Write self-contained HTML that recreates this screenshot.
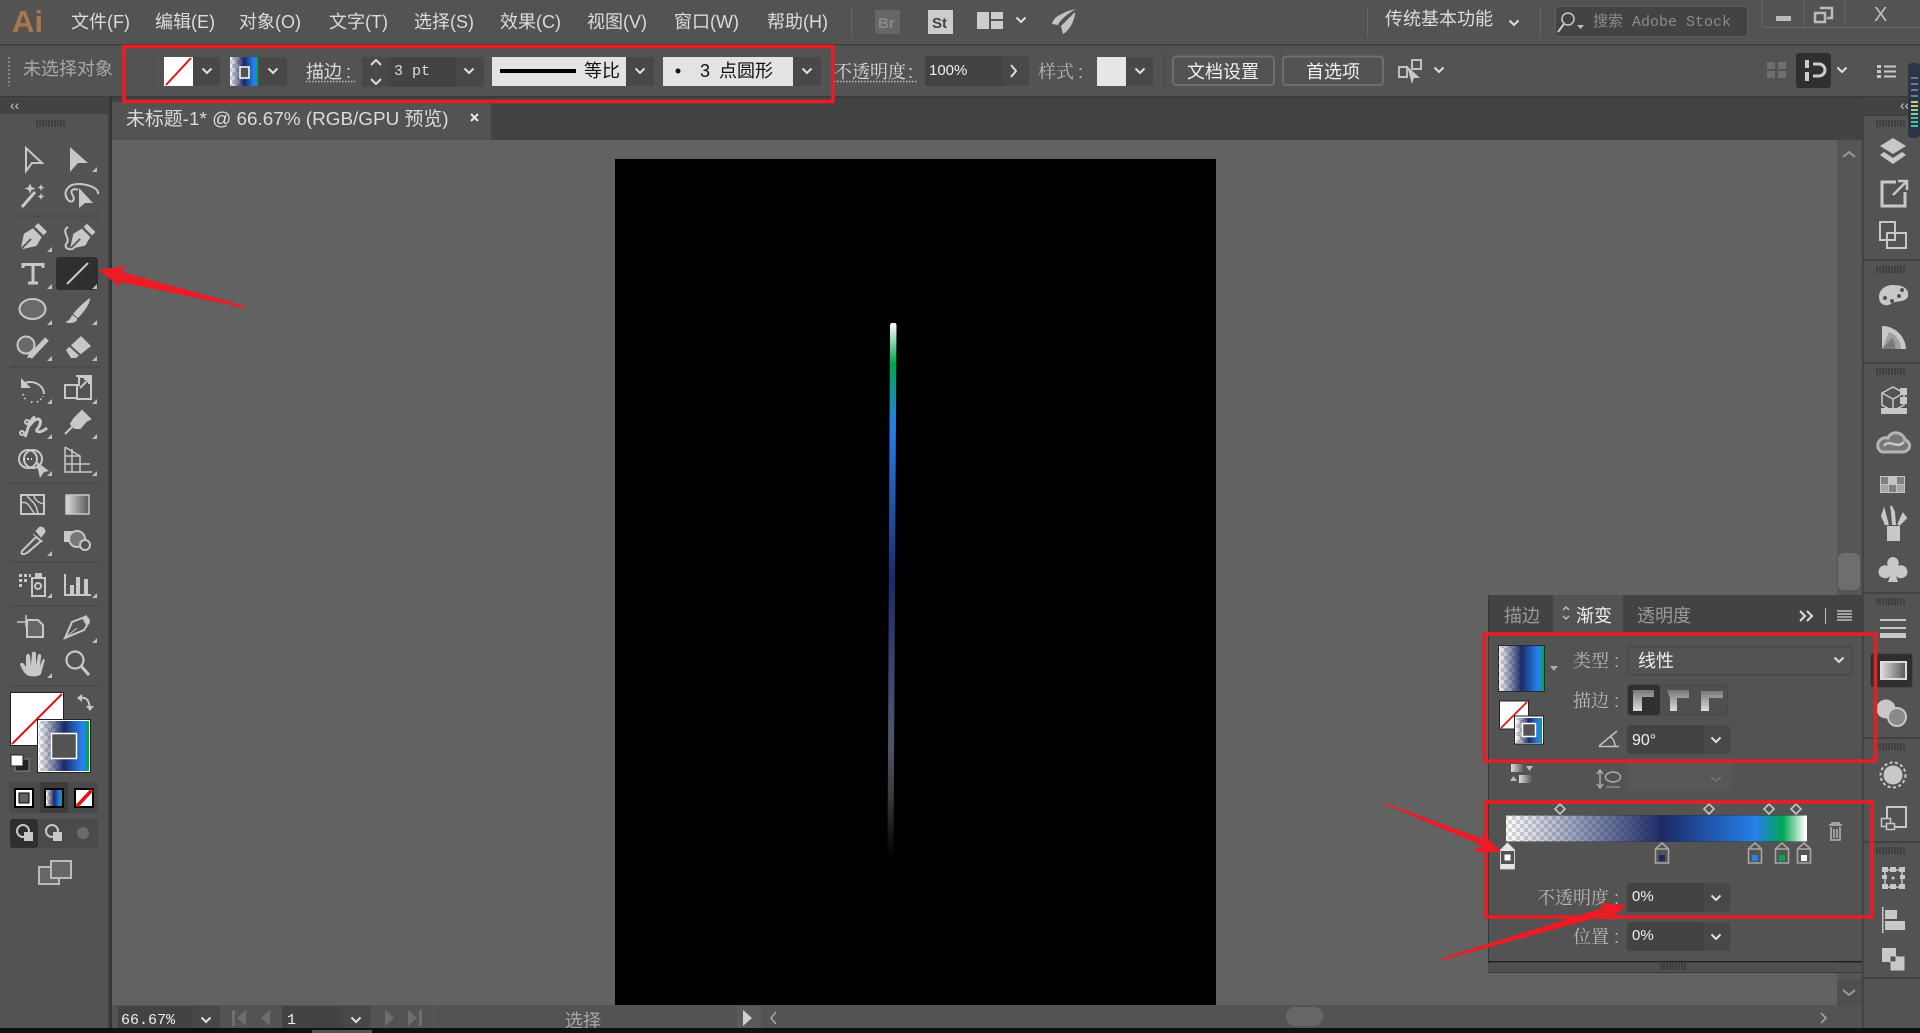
<!DOCTYPE html>
<html lang="zh"><head><meta charset="utf-8"><title>Illustrator</title>
<style>
html,body{margin:0;padding:0;width:1920px;height:1033px;overflow:hidden;background:#535353}
svg{display:block}
text{font-family:"Liberation Sans","Noto Sans CJK SC",sans-serif;font-size:18px;fill:#ccc}
.m{fill:#dcdcdc}.d{fill:#a8a8a8}.w{fill:#f0f0f0}.k{fill:#111}
.s{font-family:"Liberation Sans","Noto Serif CJK SC",serif;fill:#b8b8b8}
.o{font-family:"Liberation Mono","Noto Sans CJK SC",monospace;font-size:15px}
.i{fill:none;stroke:#c8c8c8;stroke-width:2}
.f{fill:#c8c8c8}
.r{fill:none;stroke:#ed1c24;stroke-width:3.5}
.h{fill:none;stroke:#c0c0c0;stroke-width:2}
</style></head><body>
<svg width="1920" height="1033" viewBox="0 0 1920 1033" xmlns="http://www.w3.org/2000/svg">
<defs>
<linearGradient id="g"><stop offset="0" stop-color="#1b2a66" stop-opacity="0"/><stop offset=".52" stop-color="#1b2a66"/><stop offset=".83" stop-color="#2680eb"/><stop offset=".92" stop-color="#00a651"/><stop offset=".995" stop-color="#fff"/></linearGradient>
<linearGradient id="g3"><stop offset="0" stop-color="#1b2a66" stop-opacity="0"/><stop offset=".5" stop-color="#1b2a66"/><stop offset=".85" stop-color="#2680eb"/><stop offset=".93" stop-color="#2680eb"/><stop offset=".95" stop-color="#00a651"/></linearGradient>
<linearGradient id="gy"><stop offset="0" stop-color="#ddd"/><stop offset="1" stop-color="#555"/></linearGradient>
<linearGradient id="gv" x1="0" y1="0" x2="0" y2="1"><stop offset="0" stop-color="#777"/><stop offset="1" stop-color="#ddd"/></linearGradient>
<linearGradient id="ln" gradientUnits="userSpaceOnUse" x1="0" y1="323" x2="0" y2="858"><stop offset="0" stop-color="#fff"/><stop offset=".075" stop-color="#00a651"/><stop offset=".19" stop-color="#2680eb"/><stop offset=".48" stop-color="#1b2a66"/><stop offset=".647" stop-color="#3a4570"/><stop offset=".786" stop-color="#50566a"/><stop offset=".89" stop-color="#383838"/><stop offset="1" stop-color="#000"/></linearGradient>
<pattern id="ck" width="8" height="8" patternUnits="userSpaceOnUse"><rect width="8" height="8" fill="#fff"/><rect width="4" height="4" fill="#d8d8d8"/><rect x="4" y="4" width="4" height="4" fill="#d8d8d8"/></pattern>
<path id="c" d="M-4.5,-2.5 L0,2 L4.5,-2.5" fill="none" stroke="#e0e0e0" stroke-width="2"/>
<path id="t" d="M0,0 H-5 L0,-5Z" fill="#c0c0c0"/>
<path id="gr" d="M0,0v7M3,0v7M6,0v7M9,0v7M12,0v7M15,0v7M18,0v7M21,0v7M24,0v7M27,0v7" stroke="#2c2c2c" stroke-width="1" fill="none"/>
<path id="dm" d="M0,-5 L5,0 L0,5 L-5,0Z" fill="#535353" stroke="#c4c4c4" stroke-width="1.6"/>
<path id="st" d="M-6.5,10 V-4 L0,-10 L6.5,-4 V10Z M-6.5,-4 H6.5" fill="#535353" stroke="#a8a8a8" stroke-width="1.6"/>
</defs>

<rect width="1920" height="1033" fill="#535353"/>
<!-- tab strip + canvas -->
<rect x="108" y="97" width="1812" height="43" fill="#434343"/>
<rect x="112" y="140" width="1750" height="865" fill="#626262"/>
<rect x="615" y="159" width="601" height="846" fill="#000"/>
<polygon points="890,325 891,323 895.500,323 896.500,325 893.500,858 887.500,858" fill="url(#ln)"/>

<!-- menu bar -->
<rect width="1920" height="45" fill="#535353"/>
<rect y="44" width="1920" height="1.500" fill="#3c3c3c"/>
<text x="12" y="32" style="font-size:31px;font-weight:700;fill:#a8774e">Ai</text>
<text class="m" x="71" y="28">文件(F)</text><text class="m" x="155" y="28">编辑(E)</text><text class="m" x="239" y="28">对象(O)</text><text class="m" x="329" y="28">文字(T)</text><text class="m" x="414" y="28">选择(S)</text><text class="m" x="500" y="28">效果(C)</text><text class="m" x="587" y="28">视图(V)</text><text class="m" x="674" y="28">窗口(W)</text><text class="m" x="767" y="28">帮助(H)</text>
<rect x="851" y="8" width="1" height="29" fill="#666"/>
<rect x="875" y="10" width="25" height="24" fill="#666"/><text x="878" y="28" style="font-size:15px;font-weight:700;fill:#8a8a8a">Br</text>
<rect x="928" y="10" width="25" height="24" fill="#ccc"/><text x="932" y="28" style="font-size:15px;font-weight:700;fill:#444">St</text>
<path d="M977,12h12v17h-12zM991,12h12v7h-12zM991,21h12v8h-12z" fill="#ccc"/><use href="#c" x="1021" y="20"/>
<path d="M1076,9 C1072,11 1061,18 1058,25 L1052,24 C1053,20 1056,16 1062,14 C1066,11 1072,10 1076,9Z M1075,12 C1075,20 1070,30 1063,34 L1061,26 C1065,22 1071,16 1075,12Z" fill="#c4c4c4"/>
<rect x="1367" y="8" width="1" height="29" fill="#666"/>
<text class="m" x="1385" y="25">传统基本功能</text><use href="#c" x="1514" y="23"/>
<rect x="1540" y="8" width="1" height="29" fill="#666"/>
<rect x="1555.500" y="6.500" width="192" height="30" rx="3" fill="#434343" stroke="#5e5e5e"/>
<circle cx="1568" cy="19" r="6" class="i" style="stroke-width:1.500"/><path d="M1564,24 L1558,32" class="i"/><path d="M1577,25h7l-3.500,4z" fill="#bbb"/>
<text class="o" x="1593" y="26" style="fill:#8c8c8c">搜索 Adobe Stock</text>
<path d="M1762,0 V27.500 H1920 M1804,0 V27 M1845,0 V27" fill="none" stroke="#666"/>
<rect x="1776" y="16" width="15" height="5" fill="#bbb"/>
<path d="M1820,8h12v10h-5M1815,13h10v9h-10z" fill="none" stroke="#bbb" stroke-width="2.500"/>
<text x="1874" y="21" style="font-size:20px;fill:#c0c0c0">X</text>

<!-- options bar -->
<rect y="46" width="1920" height="51" fill="#535353"/>
<rect y="96" width="1920" height="1.500" fill="#3a3a3a"/>
<path d="M9,57V86" stroke="#888" stroke-dasharray="2 2" stroke-width="2"/>
<text class="d" x="23" y="75">未选择对象</text>
<rect x="153" y="52" width="1" height="38" fill="#484848"/>
<rect x="164" y="57" width="56" height="29" rx="3" fill="#484848"/>
<rect x="164" y="57" width="29" height="29" fill="#fff"/><path d="M166,85 L191,58" stroke="#e0101c" stroke-width="2"/><use href="#c" x="207" y="71"/>
<rect x="230" y="57" width="57" height="29" rx="3" fill="#484848"/>
<rect x="230" y="57" width="28" height="29" fill="url(#ck)"/><rect x="230" y="57" width="28" height="29" fill="url(#g3)"/><rect x="240" y="67" width="9" height="11" fill="#535353" stroke="#fff" stroke-width="1.500"/><use href="#c" x="273" y="71"/>
<text class="m" x="306" y="78">描边<tspan x="346">:</tspan></text><path d="M306,81.500H355" stroke="#bbb" stroke-dasharray="1.500 1.500" stroke-width="1.500"/>
<rect x="362" y="57" width="122" height="30" rx="3" fill="#484848"/><rect x="389" y="57" width="67" height="30" fill="#434343"/>
<path d="M371,65 L376,60 L381,65 M371,79 L376,84 L381,79" class="i" style="stroke:#ddd"/>
<text class="o m" x="394" y="75">3 pt</text><use href="#c" x="469" y="71"/>
<rect x="492" y="57" width="162" height="29" rx="3" fill="#484848"/><rect x="492" y="57" width="134" height="29" fill="#e3e3e3"/>
<rect x="500" y="69" width="76" height="4" fill="#000"/>
<text class="k" x="584" y="77">等比</text><use href="#c" x="640" y="71"/>
<rect x="663" y="57" width="158" height="29" rx="3" fill="#484848"/><rect x="663" y="57" width="130" height="29" fill="#e3e3e3"/>
<circle cx="678" cy="71" r="2.500" fill="#111"/>
<text class="k" x="700" y="77">3</text><text class="k" x="719" y="77">点圆形</text><use href="#c" x="807" y="71"/>
<text class="s" x="834" y="78" style="fill:#dcdcdc">不透明度<tspan x="908">:</tspan></text><path d="M834,81.500H917" stroke="#bbb" stroke-dasharray="1.500 1.500" stroke-width="1.500"/>
<rect x="925" y="56" width="104" height="30" rx="3" fill="#484848"/><rect x="925" y="56" width="77" height="30" fill="#434343"/>
<text class="w" x="929" y="75" style="font-size:15px">100%</text><path d="M1011,65 L1016,71 L1011,77" class="i" style="stroke:#ddd"/>
<text class="s" x="1038" y="78">样式<tspan x="1078">:</tspan></text>
<rect x="1097" y="57" width="56" height="29" rx="3" fill="#484848"/><rect x="1097" y="57" width="29" height="29" fill="#e6e6e6"/><use href="#c" x="1140" y="71"/>
<rect x="1164" y="52" width="1" height="38" fill="#484848"/>
<rect x="1173" y="56.500" width="101" height="28.500" rx="3" fill="#535353" stroke="#6e6e6e" stroke-width="2"/><text class="w" x="1187" y="78">文档设置</text>
<rect x="1283" y="56.500" width="100" height="28.500" rx="3" fill="#535353" stroke="#6e6e6e" stroke-width="2"/><text class="w" x="1306" y="78">首选项</text>
<path d="M1399,67h8v10h-8zM1412,60h9v9h-9z" fill="none" stroke="#c0c0c0" stroke-width="2"/><path d="M1407,66 L1420,78 L1414,78 L1412,84 Z" fill="#c8c8c8"/><use href="#c" x="1439" y="70"/>
<path d="M1767,62h8v7h-8zM1778,62h8v7h-8zM1767,71h8v7h-8zM1778,71h8v7h-8z" fill="#6f6f6f"/>
<rect x="1796" y="53" width="35" height="35" rx="3" fill="#2f2f2f"/>
<path d="M1807,60v8M1807,72v9" stroke="#ccc" stroke-width="4"/><path d="M1813,64h6a6,6 0 0 1 0,12h-6" fill="none" stroke="#ccc" stroke-width="3"/><use href="#c" x="1842" y="70"/>
<path d="M1877,65h4v3h-4zM1877,70h4v3h-4zM1877,75h4v3h-4z" fill="#c8c8c8"/><path d="M1884,66.500h12M1884,71.500h12M1884,76.500h12" stroke="#c8c8c8" stroke-width="2"/>

<!-- document tab -->
<rect x="112" y="102" width="379" height="38" fill="#535353"/>
<text class="m" x="126" y="125" style="font-size:18.9px">未标题-1* @ 66.67% (RGB/GPU 预览)</text>
<path d="M471,114l7,7m0,-7l-7,7" stroke="#e8e8e8" stroke-width="2"/>

<!-- tools panel -->
<rect x="0" y="97" width="108" height="17" fill="#434343"/>
<rect x="0" y="114" width="108" height="914" fill="#535353"/>
<rect x="108" y="97" width="2" height="931" fill="#404040"/><rect x="110" y="97" width="2" height="931" fill="#333"/>
<text x="10" y="110" style="font-size:14px;fill:#ccc">‹‹</text>
<use href="#gr" x="37" y="120"/>
<path d="M9,216H100M9,367H100M9,483H100M9,562H100M9,606H100M9,686H100" stroke="#4a4a4a" stroke-width="1.500"/>

<!-- row 1 -->
<path d="M26,148 L42,163 L32,163 L26,171Z" class="i"/>
<path d="M70,147 L88,163 L78,163 L70,172Z" class="f"/><use href="#t" x="97" y="172"/>
<!-- row 2 -->
<path d="M22,207 L35,192" stroke="#c8c8c8" stroke-width="3"/><path d="M30,183l1.500,4 4,1.500 -4,1.500 -1.500,4 -1.500,-4 -4,-1.500 4,-1.500zM41,184l1,2.500 2.500,1 -2.500,1 -1,2.500 -1,-2.500 -2.500,-1 2.500,-1zM41,193l1,2.500 2.500,1 -2.500,1 -1,2.500 -1,-2.500 -2.500,-1 2.500,-1z" class="f"/>
<path d="M68,200 C62,192 68,184 78,184 C88,184 99,188 98,194 M68,200 C72,204 76,200 72,194 C70,190 74,188 78,190" class="i"/><path d="M79,188 L93,203 L85,203 L79,208Z" class="f"/>
<!-- row 3 pen -->
<g transform="translate(32,238) rotate(45) scale(1.250)"><path d="M0,13 L-7,2 L-5,-6 H5 L7,2Z M-5,-12 H5 V-8 H-5Z" class="f"/><path d="M0,13V1" stroke="#535353" stroke-width="1.500"/></g><use href="#t" x="52" y="252"/>
<g transform="translate(81,238) rotate(45) scale(1.200)"><path d="M0,13 L-7,2 L-5,-6 H5 L7,2Z M-5,-12 H5 V-8 H-5Z" class="f"/><path d="M0,13V1" stroke="#535353" stroke-width="1.500"/></g><path d="M68,227 C60,232 72,238 66,244 C64,250 72,250 74,248" class="i"/>
<!-- row 4 -->
<path d="M23,268V264.500H43V268M33,265V282M28,283H38" fill="none" stroke="#c8c8c8" stroke-width="3"/><use href="#t" x="52" y="289"/>
<rect x="56" y="257" width="42" height="33" rx="3" fill="#2f2f2f"/><path d="M67,284 L88,263" stroke="#c8c8c8" stroke-width="2"/><use href="#t" x="97" y="289"/>
<!-- row 5 -->
<ellipse cx="32.500" cy="309" rx="13" ry="10" fill="#6a6a6a" stroke="#c8c8c8" stroke-width="2"/><use href="#t" x="52" y="325"/>
<path d="M90,298 C84,302 76,310 73,314 L78,318 C84,312 90,304 90,298Z M72,315 C70,320 68,321 65,322 C70,324 78,323 77,318Z" class="f"/><use href="#t" x="97" y="325"/>
<!-- row 6 -->
<circle cx="26" cy="345" r="8.500" fill="#6a6a6a" stroke="#c8c8c8" stroke-width="2"/><path d="M30,357 L47,339" stroke="#c8c8c8" stroke-width="5"/><path d="M27,358l2,-5 4,4z" class="f"/><use href="#t" x="52" y="361"/>
<path d="M66,350 L81,336 L91,346 L76,358 L71,358Z" class="f"/><path d="M70,346 L80,355" stroke="#535353" stroke-width="2"/><use href="#t" x="97" y="361"/>
<!-- row 7 -->
<path d="M22,385 C30,378 44,384 44,394" class="i"/><path d="M21,378v10h10z" class="f"/><path d="M23,394a14,14 0 0 0 4,7M31,402h2M37,402a12,12 0 0 0 6,-6" fill="none" stroke="#c8c8c8" stroke-width="2" stroke-dasharray="1.500 2.500"/><use href="#t" x="52" y="404"/>
<path d="M65,385h14v-8h12v22h-14v-14M65,385v13h12v-13z" fill="none" stroke="#c8c8c8" stroke-width="2"/><path d="M76,376h15v15" class="i"/><path d="M80,388 L88,380M84,379h5v5" class="i"/><use href="#t" x="97" y="404"/>
<!-- row 8 -->
<path d="M25,437 L30,422 C38,412 32,420 28,428 M30,425 C38,414 44,420 38,428 C34,432 40,434 47,428" class="i" style="stroke-width:3"/><circle cx="22" cy="433" r="2" class="i"/><circle cx="27" cy="422" r="2" class="i"/><use href="#t" x="52" y="439"/>
<path d="M74,419 L82,411 L90,419 L86,421 L80,428 L75,428 L71,424Z M74,425 L65,434" class="f" stroke="#c8c8c8" stroke-width="2"/><use href="#t" x="97" y="439"/>
<!-- row 9 -->
<circle cx="28" cy="459" r="9" class="i"/><circle cx="33" cy="459" r="9" class="i"/><path d="M23,459h9" stroke="#ddd" stroke-width="2" stroke-dasharray="2 2"/><path d="M36,461 L49,471 L44,472 L40,478Z" class="f"/><use href="#t" x="52" y="476"/>
<path d="M65,447 V472 H92 M65,447 L80,456 V472 M65,456 H80 M65,464 H90 M72,449 V472" fill="none" stroke="#c8c8c8" stroke-width="1.500"/><use href="#t" x="97" y="476"/>
<!-- row 10 -->
<rect x="21" y="495" width="23" height="19" fill="none" stroke="#c8c8c8" stroke-width="2"/><path d="M21,503 C28,500 30,508 34,513 M27,495 C28,500 36,500 38,514 M34,495 C34,499 38,503 44,504" class="i" style="stroke-width:1.500"/>
<rect x="66" y="495" width="23" height="19" fill="url(#gy)" stroke="#c8c8c8" stroke-width="1.500"/>
<!-- row 11 -->
<path d="M22,551 L36,537 L41,541 L27,553 Q20,556 22,551Z" class="i"/><path d="M36,531 L40,527 C43,527 45,529 45,532 L41,537Z M33,534 L43,542" class="f" stroke="#c8c8c8"/><use href="#t" x="52" y="556"/>
<rect x="64" y="531" width="11" height="11" class="f"/><circle cx="77" cy="539" r="8" fill="#777" stroke="#c8c8c8" stroke-width="2"/><circle cx="85" cy="545" r="5" fill="#535353" stroke="#c8c8c8" stroke-width="2"/>
<!-- row 12 -->
<rect x="32" y="578" width="13" height="18" fill="#535353" stroke="#c8c8c8" stroke-width="2"/><rect x="35" y="573" width="7" height="4" class="f"/><circle cx="38" cy="586" r="3" fill="none" stroke="#c8c8c8" stroke-width="2"/><path d="M19,574h3v3h-3zM24,574h3v3h-3zM29,574h2v3h-2zM19,579h3v3h-3zM24,579h3v3h-3zM19,584h3v3h-3z" class="f"/><use href="#t" x="52" y="598"/>
<path d="M65,574 V595 H91" class="i"/><path d="M70,585h4v9h-4zM76,577h4v17h-4zM84,579h4v15h-4z" class="f"/><use href="#t" x="97" y="598"/>
<!-- row 13 -->
<path d="M17,622h14M26,615v12" stroke="#c8c8c8" stroke-width="1.500"/><path d="M27,620h11l5,5v12H27Z" fill="#666" stroke="#c8c8c8" stroke-width="2"/>
<path d="M65,638 L72,622 L85,617 L89,622 L84,630 Z" fill="none" stroke="#c8c8c8" stroke-width="2"/><path d="M82,618 L86,615 L90,620 L86,625Z" class="f"/><path d="M65,638 L77,628" stroke="#c8c8c8"/><use href="#t" x="97" y="643"/>
<!-- row 14 hand/zoom -->
<path d="M27,675 C23,672 21,667 20,664 C22,661 25,665 26,667 L26,656 C27,653 29,653 30,656 L31,665 L32,653 C33,651 36,651 36,654 L36,665 L38,655 C39,653 42,654 41,657 L40,666 L43,659 C45,658 45,660 44,663 L41,674 C38,677 31,677 27,675Z" class="f"/><use href="#t" x="52" y="678"/>
<circle cx="75" cy="660" r="8.500" fill="none" stroke="#c8c8c8" stroke-width="2.200"/><path d="M81,666 L89,675" stroke="#c8c8c8" stroke-width="3"/>

<!-- fill/stroke -->
<rect x="10.500" y="692.500" width="53" height="53" fill="#fff" stroke="#222"/><path d="M12,744 L62,694" stroke="#e8101c" stroke-width="2"/>
<rect x="37.500" y="719.500" width="53" height="53" fill="#fff" stroke="#222"/><rect x="39" y="721" width="50" height="50" fill="url(#ck)"/><rect x="39" y="721" width="50" height="50" fill="url(#g3)"/>
<rect x="51.500" y="733.500" width="25" height="25" fill="#535353" stroke="#fff" stroke-width="1.500"/>
<path d="M78,698 C88,696 89,702 90,708" class="i"/><path d="M77,698l5,-4v8zM86,706h8l-4,5z" class="f"/>
<rect x="15" y="759" width="14" height="12" fill="#222" stroke="#888"/><rect x="11" y="755" width="12" height="11" fill="#fff" stroke="#222"/>
<rect x="9" y="782" width="89" height="31" rx="3" fill="#4a4a4a"/><rect x="40" y="782" width="28" height="31" fill="#3c3c3c"/>
<rect x="15" y="789" width="18" height="18" fill="#fff" stroke="#000" stroke-width="2"/><rect x="19" y="793" width="10" height="10" fill="#616161" stroke="#000"/>
<rect x="45" y="789" width="18" height="18" fill="url(#ck)" stroke="#000" stroke-width="2"/><rect x="46" y="790" width="16" height="16" fill="url(#g3)"/>
<rect x="75" y="789" width="18" height="18" fill="#fff" stroke="#000" stroke-width="2"/><path d="M77,806 L92,790" stroke="#e8101c" stroke-width="3.500"/>
<rect x="10" y="819" width="88" height="29" rx="3" fill="#4a4a4a"/><rect x="10" y="819" width="28" height="29" rx="3" fill="#2f2f2f"/>
<circle cx="23" cy="831" r="6" class="i"/><rect x="24" y="832" width="9" height="9" class="f"/>
<circle cx="52" cy="831" r="6" class="i"/><rect x="53" y="832" width="9" height="9" class="f"/>
<circle cx="83" cy="833" r="6" fill="#6a6a6a"/>
<path d="M39,867h20v17h-20z" fill="#666" stroke="#bbb" stroke-width="2"/><path d="M51,861h20v17h-20z" fill="#666" stroke="#bbb" stroke-width="2"/>

<!-- right scrollbar -->
<rect x="1837" y="140" width="25" height="865" fill="#565656"/>
<path d="M1843,157 L1849,152 L1855,157" fill="none" stroke="#999" stroke-width="2"/>
<rect x="1838" y="553" width="22" height="37" rx="6" fill="#6e6e6e"/>
<rect x="1837" y="980" width="25" height="25" fill="#4f4f4f"/>
<path d="M1843,990 L1849,995 L1855,990" fill="none" stroke="#999" stroke-width="2"/>

<!-- right dock -->
<rect x="1862" y="97" width="58" height="931" fill="#535353"/>
<rect x="1862" y="97" width="1.500" height="931" fill="#3e3e3e"/>
<rect x="1862" y="97" width="58" height="18" fill="#434343"/>
<rect x="1862" y="115" width="58" height="1" fill="#3a3a3a"/>
<path d="M1863,260H1920M1863,363H1920M1863,593H1920M1863,738H1920M1863,842H1920M1863,978H1920" stroke="#3d3d3d" stroke-width="1.500"/>
<text x="1900" y="110" style="font-size:14px;fill:#ccc">‹‹</text>
<use href="#gr" x="1877" y="120"/><use href="#gr" x="1877" y="266"/><use href="#gr" x="1877" y="368"/><use href="#gr" x="1877" y="598"/><use href="#gr" x="1877" y="743"/><use href="#gr" x="1877" y="847"/>
<!-- meter -->
<rect x="1908" y="63" width="12" height="75" rx="4" fill="#2b3548"/>
<path d="M1911,78h7M1911,84h7M1911,90h7M1911,96h7" stroke="#6f7a90" stroke-width="2"/>
<path d="M1911,102h7M1911,106h7" stroke="#c9cf6a" stroke-width="2"/><path d="M1911,110h7M1911,114h7" stroke="#8fd08a" stroke-width="2"/><path d="M1911,118h7M1911,122h7M1911,126h7" stroke="#45c2a0" stroke-width="2"/>

<path d="M1893,138 L1906,146 L1893,154 L1880,146Z M1884,152 L1893,158 L1902,152 L1906,155 L1893,164 L1880,155Z" class="f"/>
<path d="M1896,182h-14v24h23v-14" fill="none" stroke="#c8c8c8" stroke-width="3"/><path d="M1893,195 L1906,182M1898,181h9v9" fill="none" stroke="#c8c8c8" stroke-width="2.500"/>
<path d="M1880,222h15v18h-15zM1887,233h19v15h-19z" fill="#535353" stroke="#c8c8c8" stroke-width="2"/>
<path d="M1893,285 C1905,285 1909,290 1908,296 C1907,302 1896,301 1892,303 C1888,307 1879,306 1879,297 C1879,290 1885,285 1893,285Z" class="f"/><circle cx="1885" cy="298" r="2" fill="#535353"/><circle cx="1892" cy="301" r="2" fill="#535353"/><circle cx="1899" cy="296" r="2" fill="#535353"/><circle cx="1902" cy="290" r="2" fill="#535353"/>
<path d="M1882,326 A24,24 0 0 1 1906,349 H1882Z" class="f"/><path d="M1882,349 L1889,332 A18,18 0 0 1 1901,349Z" fill="#a0a0a0"/><path d="M1882,349 L1892,338 A13,13 0 0 1 1895,349Z" fill="#7a7a7a"/>
<path d="M1893,387 L1904,393 V405 L1893,411 L1882,405 V393Z M1882,393 L1893,399 L1904,393 M1893,399V411" fill="none" stroke="#c8c8c8" stroke-width="1.500"/><rect x="1900" y="388" width="7" height="7" class="f"/><rect x="1900" y="397" width="7" height="7" class="f"/><rect x="1881" y="408" width="26" height="6" class="f"/>
<path d="M1882,452 C1874,448 1878,436 1888,438 C1892,429 1904,433 1905,440 C1912,442 1911,452 1902,452 Z" fill="#777" stroke="#b4b4b4" stroke-width="3"/><path d="M1884,446 C1890,438 1896,450 1904,442" fill="none" stroke="#c8c8c8" stroke-width="2.500"/>
<rect x="1880" y="476" width="25" height="17" fill="#c4c4c4"/><path d="M1881,477h7v7h-7zM1897,477h7v7h-7zM1889,485h7v7h-7z" fill="#7e7e7e"/><path d="M1881,485h7v7h-7zM1897,485h7v7h-7z" fill="#a4a4a4"/>
<path d="M1887,526h13v15h-13z" class="f"/><path d="M1888,525 L1884,510 L1882,516 L1886,525M1893,525 L1892,512 L1891,506 L1894,512 L1895,525M1898,525 L1903,514 L1906,518 L1899,525" class="f" stroke="#c8c8c8" stroke-width="2"/>
<path d="M1893,557 a6,6 0 0 1 5,9 a6.500,6.500 0 1 1 -2,10 l2,6 h-10 l2,-6 a6.500,6.500 0 1 1 -2,-10 a6,6 0 0 1 5,-9z" class="f"/>
<path d="M1880,620h26M1880,628h26" stroke="#c8c8c8" stroke-width="2"/><rect x="1880" y="633" width="26" height="5" class="f"/>
<rect x="1870.500" y="653.500" width="42" height="34" rx="3" fill="#2f2f2f" stroke="#484848"/><rect x="1881" y="662" width="25" height="17" fill="url(#gy)" stroke="#ddd" stroke-width="2"/>
<circle cx="1886" cy="709" r="9.500" class="f"/><circle cx="1897" cy="717" r="9" fill="#8a8a8a" stroke="#c8c8c8" stroke-width="2"/>
<circle cx="1893" cy="775" r="9.500" class="f"/><circle cx="1893" cy="775" r="12.500" fill="none" stroke="#c8c8c8" stroke-width="2" stroke-dasharray="3 2.500"/>
<rect x="1887" y="807" width="19" height="20" fill="none" stroke="#c8c8c8" stroke-width="2"/><rect x="1881.500" y="818.500" width="9" height="8" fill="#535353" stroke="#c8c8c8" stroke-width="1.500"/><rect x="1886.500" y="823.500" width="8" height="6" fill="#535353" stroke="#c8c8c8" stroke-width="1.500"/>
<rect x="1885" y="870" width="17" height="17" fill="none" stroke="#c8c8c8" stroke-width="1.500"/><path d="M1882,867h6v5h-6zM1890,867h6v5h-6zM1899,867h6v5h-6zM1882,875h5v4h-5zM1900,875h5v4h-5zM1882,884h6v5h-6zM1890,884h6v5h-6zM1899,884h6v5h-6z" class="f"/><circle cx="1893" cy="878" r="1.500" class="f"/>
<rect x="1882" y="907" width="1.500" height="26" class="f"/><rect x="1885" y="910" width="12" height="9" class="f"/><rect x="1885" y="921" width="20" height="9" class="f"/>
<path d="M1882,948h14v14h-14z" class="f"/><path d="M1890,956h15v15h-15z" class="f" stroke="#535353"/><rect x="1890" y="956" width="6" height="6" fill="#535353" stroke="#c8c8c8"/>

<!-- gradient panel -->
<rect x="1488" y="595" width="374" height="38" fill="#434343"/>
<rect x="1488" y="633" width="374" height="328" fill="#535353"/>
<path d="M1488.500,595V972H1862" fill="none" stroke="#363636"/><rect x="1488" y="961" width="374" height="1.500" fill="#1e1e1e"/>
<rect x="1488" y="963" width="374" height="9" fill="#505050"/><path d="M1661,963v7M1664,963v7M1667,963v7M1670,963v7M1673,963v7M1676,963v7M1679,963v7M1682,963v7M1685,963v7" stroke="#2c2c2c"/>
<rect x="1488" y="972" width="374" height="1" fill="#3a3a3a"/>
<rect x="1553" y="595" width="70" height="38" fill="#535353"/>
<text class="d" x="1504" y="622" style="fill:#9a9a9a">描边</text>
<path d="M1563,610 l3,-3 3,3M1563,616 l3,3 3,-3" fill="none" stroke="#bbb" stroke-width="1.500"/>
<text class="w" x="1576" y="622">渐变</text><text class="d" x="1637" y="622" style="fill:#9a9a9a">透明度</text>
<path d="M1800,611l5,5 -5,5M1807,611l5,5 -5,5" fill="none" stroke="#e0e0e0" stroke-width="2"/><rect x="1825" y="608" width="1" height="16" fill="#bbb"/>
<path d="M1837,611h15M1837,614h15M1837,617h15M1837,620h15" stroke="#c0c0c0" stroke-width="1.500"/>

<rect x="1498" y="645" width="47" height="47" fill="#2a2a2a"/><rect x="1499" y="646" width="45" height="45" fill="url(#ck)"/><rect x="1499" y="646" width="45" height="45" fill="url(#g3)"/>
<path d="M1550,666h8l-4,5z" fill="#aaa"/>
<rect x="1499.500" y="701" width="29" height="28" fill="#fff" stroke="#222"/><path d="M1501,728 L1527,702" stroke="#e8101c" stroke-width="1.800"/>
<rect x="1514.500" y="716" width="29" height="28" fill="#fff" stroke="#222"/><rect x="1516" y="718" width="26" height="25" fill="url(#ck)"/><rect x="1516" y="718" width="26" height="25" fill="url(#g3)"/><rect x="1522.500" y="723.500" width="13" height="13" fill="#535353" stroke="#fff" stroke-width="1.500"/>

<text class="s" x="1573" y="667">类型<tspan x="1614">:</tspan></text>
<rect x="1627.500" y="646.500" width="224" height="28.500" rx="3" fill="#535353" stroke="#484848" stroke-width="1.500"/>
<text class="w" x="1638" y="667">线性</text><use href="#c" x="1839" y="660"/>
<text class="s" x="1573" y="707">描边<tspan x="1614">:</tspan></text>
<rect x="1627.500" y="684.500" width="100" height="31" rx="3" fill="#4f4f4f" stroke="#484848"/><rect x="1628" y="685" width="32" height="30" rx="3" fill="#2f2f2f"/>
<path d="M1633,690h21v7h-12v14h-9z" fill="url(#gv)"/><path d="M1667,690h22v8h-12v13h-7v-13z" fill="url(#gv)"/><path d="M1701,691h22v7h-14v13h-8z" fill="url(#gv)"/>
<path d="M1599,746 L1617,731 M1599,746.500 H1619 M1611,737 C1614,740 1615,743 1615,746" fill="none" stroke="#c0c0c0" stroke-width="1.500"/>
<rect x="1627" y="725" width="103" height="29" rx="3" fill="#484848"/><rect x="1627" y="725" width="77" height="29" rx="3" fill="#434343"/>
<text class="w" x="1632" y="745" style="font-size:16px">90°</text><use href="#c" x="1716" y="740"/>
<rect x="1511" y="764" width="13" height="8" fill="url(#gy)"/><path d="M1526,766h7l-3.500,5z" fill="#bbb"/><rect x="1519" y="775" width="13" height="8" fill="url(#gy)"/><path d="M1510,781h7l-3.500,-5z" fill="#bbb"/>
<path d="M1600,771v16M1597,774l3,-4 3,4M1597,784l3,4 3,-4" fill="none" stroke="#aaa" stroke-width="1.500"/><ellipse cx="1613" cy="777" rx="7.500" ry="5" fill="none" stroke="#aaa" stroke-width="1.500"/><path d="M1606,787h14" stroke="#aaa"/>
<rect x="1627" y="763" width="104" height="27" fill="#585858"/><path d="M1711,777l5,4 5,-4" fill="none" stroke="#707070" stroke-width="2"/>

<use href="#dm" x="1560" y="809"/><use href="#dm" x="1709" y="809"/><use href="#dm" x="1769" y="809"/><use href="#dm" x="1796" y="809"/>
<rect x="1506" y="815" width="301" height="27" fill="#333"/>
<rect x="1506" y="815.500" width="301" height="26" fill="url(#ck)"/><rect x="1506" y="815.500" width="301" height="26" fill="url(#g)"/>
<path d="M1829,825h13M1832,825v-2h7v2M1831,827v13h9v-13M1834,829v9M1837,829v9" fill="none" stroke="#b8b8b8" stroke-width="1.500"/>

<path d="M1500.500,869V850L1507.500,843L1514.500,850V869Z" fill="#e6e6e6" stroke="#d0d0d0"/><rect x="1501" y="851" width="13" height="13" fill="#535353"/><rect x="1504.500" y="854.500" width="6" height="6" fill="#fff"/>
<use href="#st" x="1662" y="853"/><rect x="1659" y="855" width="6" height="6" fill="#1b2a66"/>
<use href="#st" x="1755" y="853"/><rect x="1752" y="855" width="6" height="6" fill="#2680eb"/>
<use href="#st" x="1782" y="853"/><rect x="1779" y="855" width="6" height="6" fill="#00a651"/>
<use href="#st" x="1804" y="853"/><rect x="1801" y="855" width="6" height="6" fill="#fff"/>

<text class="s" x="1537" y="904">不透明度<tspan x="1614">:</tspan></text>
<rect x="1627" y="883" width="103" height="29" rx="3" fill="#484848"/><rect x="1627" y="883" width="77" height="29" rx="3" fill="#434343"/>
<text class="w" x="1632" y="901" style="font-size:15px">0%</text><use href="#c" x="1716" y="898"/>
<text class="s" x="1573" y="943">位置<tspan x="1614">:</tspan></text>
<rect x="1627" y="922" width="103" height="29" rx="3" fill="#484848"/><rect x="1627" y="922" width="77" height="29" rx="3" fill="#434343"/>
<text class="w" x="1632" y="940" style="font-size:15px">0%</text><use href="#c" x="1716" y="937"/>

<!-- status bar -->
<rect x="112" y="1005" width="1750" height="23" fill="#535353"/>
<rect x="118" y="1006" width="75" height="22" fill="#434343"/><rect x="193" y="1006" width="27" height="22" fill="#484848"/>
<text class="o w" x="121" y="1024">66.67%</text><use href="#c" x="206" y="1020"/>
<path d="M232,1010h3v16h-3zM246,1010v16l-9,-8zM270,1010v16l-9,-8z" fill="#6e6e6e"/>
<rect x="282" y="1006" width="61" height="22" fill="#434343"/><rect x="343" y="1006" width="27" height="22" fill="#484848"/>
<text class="o w" x="287" y="1024">1</text><use href="#c" x="356" y="1020"/>
<path d="M385,1010v16l9,-8zM408,1010v16l9,-8zM419,1010h3v16h-3z" fill="#6e6e6e"/>
<rect x="433" y="1006" width="1" height="22" fill="#5f5f5f"/>
<text class="d" x="565" y="1027">选择</text>
<rect x="737" y="1006" width="24" height="22" fill="#5a5a5a"/><path d="M743,1010v16l9,-8z" fill="#d0d0d0"/>
<path d="M776,1012l-5,6 5,6" fill="none" stroke="#aaa" stroke-width="1.500"/>
<rect x="1286" y="1007" width="37" height="19" rx="9" fill="#666"/>
<path d="M1821,1013l5,5 -5,5" fill="none" stroke="#aaa" stroke-width="1.500"/>
<rect x="0" y="1028" width="1920" height="5" fill="#111"/>
<rect x="312" y="1030" width="60" height="3" fill="#555"/>

<!-- red annotations -->
<rect class="r" x="124" y="46.500" width="709" height="55"/>
<rect class="r" x="1484.500" y="634" width="391" height="127"/>
<rect class="r" x="1486" y="802" width="386" height="115"/>
<polygon points="98,270 126,266 122,272 245,306 245,308 120,282 121,287" fill="#ed1c24"/>
<polygon points="1385,803 1483,839 1482,832 1501,852 1474,852 1481,845 1384,804" fill="#ed1c24"/>
<polygon points="1442,958 1603,908 1600,903 1627,905 1607,922 1610,914 1443,960" fill="#ed1c24"/>
</svg>
</body></html>
